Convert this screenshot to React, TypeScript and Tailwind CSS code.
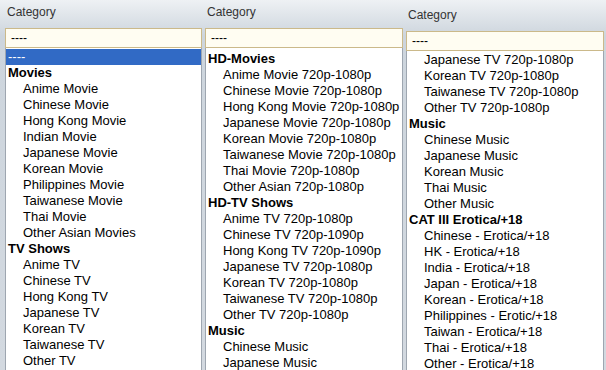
import React from "react";

type Item = { t: string; h?: boolean; sel?: boolean };

const col1: Item[] = [
  { t: "----", sel: true },
  { t: "Movies", h: true },
  { t: "Anime Movie" },
  { t: "Chinese Movie" },
  { t: "Hong Kong Movie" },
  { t: "Indian Movie" },
  { t: "Japanese Movie" },
  { t: "Korean Movie" },
  { t: "Philippines Movie" },
  { t: "Taiwanese Movie" },
  { t: "Thai Movie" },
  { t: "Other Asian Movies" },
  { t: "TV Shows", h: true },
  { t: "Anime TV" },
  { t: "Chinese TV" },
  { t: "Hong Kong TV" },
  { t: "Japanese TV" },
  { t: "Korean TV" },
  { t: "Taiwanese TV" },
  { t: "Other TV" },
];

const col2: Item[] = [
  { t: "HD-Movies", h: true },
  { t: "Anime Movie 720p-1080p" },
  { t: "Chinese Movie 720p-1080p" },
  { t: "Hong Kong Movie 720p-1080p" },
  { t: "Japanese Movie 720p-1080p" },
  { t: "Korean Movie 720p-1080p" },
  { t: "Taiwanese Movie 720p-1080p" },
  { t: "Thai Movie 720p-1080p" },
  { t: "Other Asian 720p-1080p" },
  { t: "HD-TV Shows", h: true },
  { t: "Anime TV 720p-1080p" },
  { t: "Chinese TV 720p-1090p" },
  { t: "Hong Kong TV 720p-1090p" },
  { t: "Japanese TV 720p-1080p" },
  { t: "Korean TV 720p-1080p" },
  { t: "Taiwanese TV 720p-1080p" },
  { t: "Other TV 720p-1080p" },
  { t: "Music", h: true },
  { t: "Chinese Music" },
  { t: "Japanese Music" },
];

const col3: Item[] = [
  { t: "Japanese TV 720p-1080p" },
  { t: "Korean TV 720p-1080p" },
  { t: "Taiwanese TV 720p-1080p" },
  { t: "Other TV 720p-1080p" },
  { t: "Music", h: true },
  { t: "Chinese Music" },
  { t: "Japanese Music" },
  { t: "Korean Music" },
  { t: "Thai Music" },
  { t: "Other Music" },
  { t: "CAT III Erotica/+18", h: true },
  { t: "Chinese - Erotica/+18" },
  { t: "HK - Erotica/+18" },
  { t: "India - Erotica/+18" },
  { t: "Japan - Erotica/+18" },
  { t: "Korean - Erotica/+18" },
  { t: "Philippines - Erotic/+18" },
  { t: "Taiwan - Erotica/+18" },
  { t: "Thai - Erotica/+18" },
  { t: "Other - Erotica/+18" },
];

function Row({ it }: { it: Item }) {
  if (it.sel)
    return (
      <div className="h-4 leading-4 bg-[#316ac5] text-white pl-[2px] whitespace-nowrap">{it.t}</div>
    );
  if (it.h)
    return <div className="h-4 leading-4 font-bold text-black pl-[2px] whitespace-nowrap">{it.t}</div>;
  return <div className="h-4 leading-4 text-black pl-[17px] whitespace-nowrap">{it.t}</div>;
}

function Column({
  items,
  top,
  listPad,
  className,
}: {
  items: Item[];
  top: string;
  listPad: string;
  className: string;
}) {
  return (
    <div className={"flex flex-col h-[370px] " + className}>
      <div className={"flex items-start pl-[2px] text-[12px] text-[#333] " + top}>Category</div>
      <div className="h-5 border border-[#cbb98a] bg-[#fffdf2] flex items-center pl-[5px] text-[12px] text-black">
        ----
      </div>
      <div className={"flex-1 overflow-hidden bg-white border-x border-[#9ea6b0] text-[13px] " + listPad}>
        {items.map((it, i) => (
          <Row key={i} it={it} />
        ))}
      </div>
    </div>
  );
}

export default function App() {
  return (
    <div
      className="w-[606px] h-[370px] overflow-hidden flex bg-[linear-gradient(to_bottom,#eef1f4_0px,#cdd5dd_36px,#d3d9e0_370px)]"
      style={{ fontFamily: '"Liberation Sans", Arial, sans-serif' }}
    >
      <Column items={col1} top="h-[28px] pt-[3px]" listPad="pt-[1px]" className="w-[197px] ml-[5px]" />
      <div className="w-[3px]" />
      <Column items={col2} top="h-[28px] pt-[3px]" listPad="pt-[3px]" className="w-[198px]" />
      <div className="w-[3px]" />
      <Column items={col3} top="h-[31px] pt-[6px]" listPad="pt-[1px]" className="w-[198px]" />
    </div>
  );
}
